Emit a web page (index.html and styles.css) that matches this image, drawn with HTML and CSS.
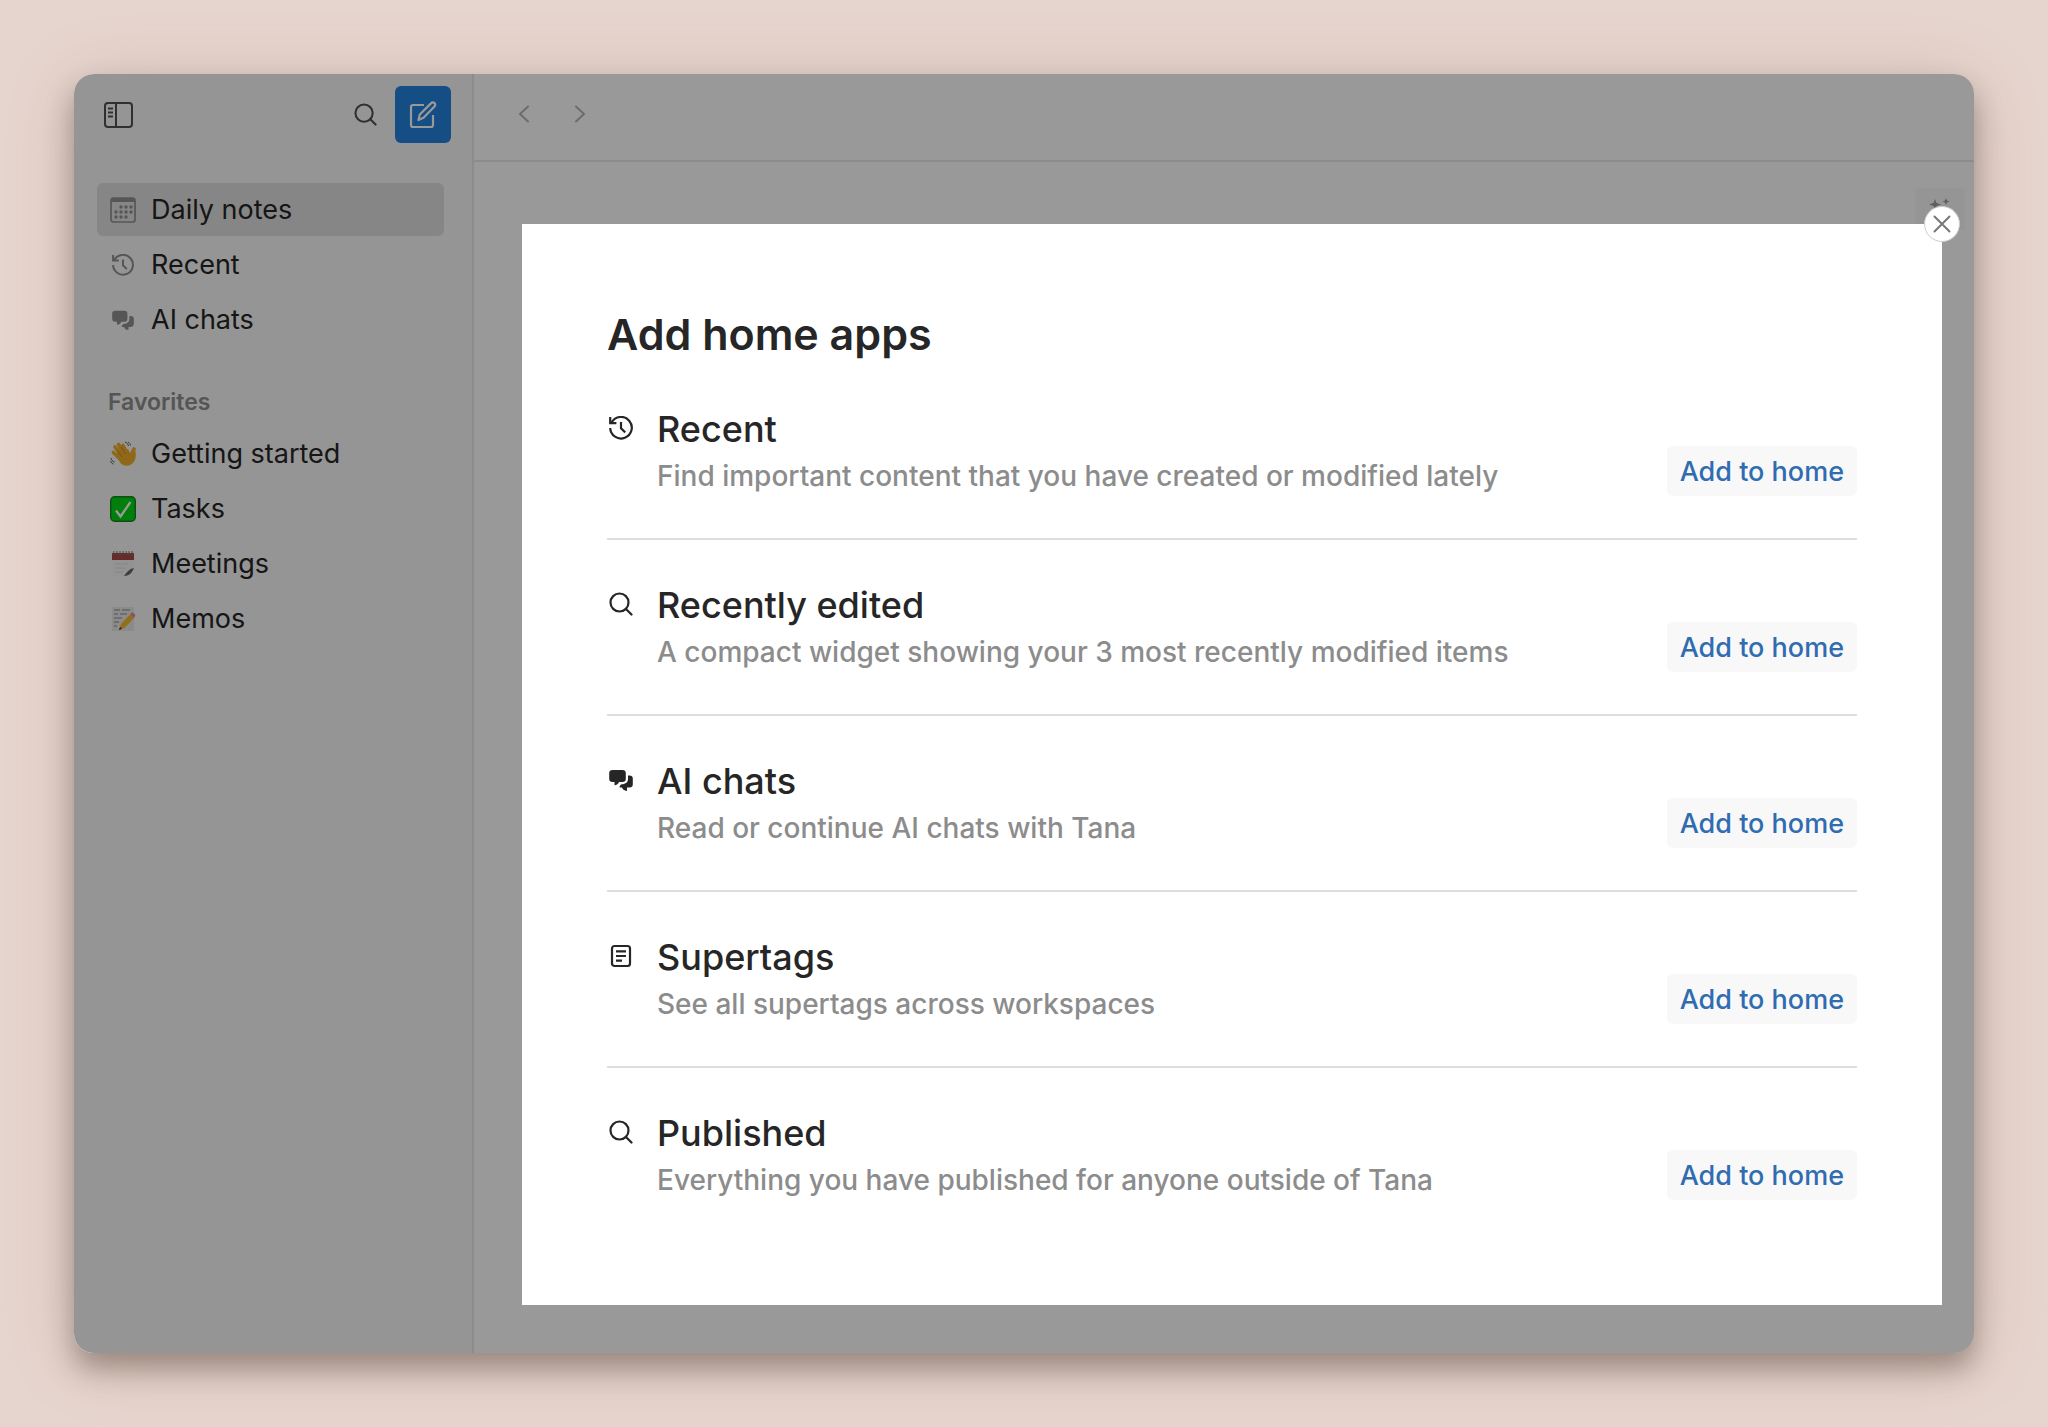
FILE: index.html
```html
<!DOCTYPE html>
<html lang="en">
<head>
    <meta charset="UTF-8">
    <meta name="viewport" content="width=device-width, initial-scale=1.0">
    <title>Add home apps</title>
    <link rel="stylesheet" href="styles.css">
</head>
<body>
    <!-- Shared icons -->
    <svg class="sprite" aria-hidden="true">
        <symbol id="icon-search" viewBox="0 0 24 24">
            <g fill="none" stroke="currentColor" stroke-width="2.200" stroke-linecap="round">
                <circle cx="10.500" cy="10.500" r="9"/>
                <path d="M17 17l5.500 5.500"/>
            </g>
        </symbol>
        <symbol id="icon-recent" viewBox="0 0 24 24">
            <g fill="none" stroke="currentColor" stroke-width="2.200">
                <path d="M2.600 6.400A10.800 10.800 0 1 1 1.200 12"/>
                <path d="M1.200 1v6.200h6.200"/>
                <path d="M12 6v6.400l4.200 4"/>
            </g>
        </symbol>
        <symbol id="icon-chats" viewBox="0 0 24 24">
            <path fill="currentColor" d="M3.500 2h10A3.300 3.300 0 0 1 16.800 5.300v5.400A3.300 3.300 0 0 1 13.500 14H10c-.6 2-2.300 3.200-4.500 3.200V14h-2A3.300 3.300 0 0 1 .2 10.700V5.300A3.300 3.300 0 0 1 3.500 2z"/>
            <path fill="currentColor" d="M19 7.500h1.500a3.300 3.300 0 0 1 3.300 3.300v5.400a3.300 3.300 0 0 1-3.300 3.300H18V23c-3-.3-4.500-2-5-3.500h-2.500c0-.8.5-2.500 2-3.200 4.500-.3 6.500-2.300 6.500-5.600z"/>
        </symbol>
    </svg>

    <div class="window">
        <aside class="sidebar">
            <div class="sidebar-top">
                <button class="icon-button toggle" aria-label="Toggle sidebar">
                    <svg width="30" height="26" viewBox="0 0 30 26" fill="none" stroke="currentColor" stroke-width="2">
                        <rect x="1" y="1" width="27" height="24" rx="3"/>
                        <path d="M12 1v24M4 6.500h5M4 10.500h5M4 14.500h5"/>
                    </svg>
                </button>
                <button class="icon-button" aria-label="Search">
                    <svg width="23" height="23"><use href="#icon-search"/></svg>
                </button>
                <button class="compose" aria-label="New note">
                    <svg width="30" height="30" viewBox="0 0 30 30" fill="none" stroke="currentColor" stroke-width="2.200" stroke-linejoin="round">
                        <path d="M16 5H5a2 2 0 0 0-2 2v18a2 2 0 0 0 2 2h18a2 2 0 0 0 2-2V15"/>
                        <path d="M10.500 20l1.300-5.500L23.200 3.100a2.300 2.300 0 0 1 3.300 0 2.300 2.300 0 0 1 0 3.300L15.500 17.700z"/>
                    </svg>
                </button>
            </div>

            <nav>
                <a href="#" class="nav-item active">
                    <svg class="nav-icon" viewBox="0 0 26 26">
                        <rect x="1" y="1" width="24" height="24" rx="2.500" fill="none" stroke="currentColor" stroke-width="1.700"/>
                        <path d="M1 1h24v4H1z" fill="currentColor"/>
                        <g fill="currentColor">
                            <circle cx="11" cy="10" r="1.700"/><circle cx="16" cy="10" r="1.700"/><circle cx="21" cy="10" r="1.700"/>
                            <circle cx="6" cy="15" r="1.700"/><circle cx="11" cy="15" r="1.700"/><circle cx="16" cy="15" r="1.700"/><circle cx="21" cy="15" r="1.700"/>
                            <circle cx="6" cy="20" r="1.700"/><circle cx="11" cy="20" r="1.700"/><circle cx="16" cy="20" r="1.700"/>
                        </g>
                    </svg>
                    Daily notes
                </a>
                <a href="#" class="nav-item">
                    <svg class="nav-icon small"><use href="#icon-recent"/></svg>
                    Recent
                </a>
                <a href="#" class="nav-item">
                    <svg class="nav-icon small"><use href="#icon-chats"/></svg>
                    AI chats
                </a>
            </nav>

            <h2 class="nav-title">Favorites</h2>
            <nav>
                <a href="#" class="nav-item">
                    <svg class="nav-icon" viewBox="0 0 26 26">
                        <g stroke="#f0ad2c" stroke-linecap="round" fill="none" stroke-width="3.600">
                            <path d="M12 15L5 6M14 13L8.500 3.500M17 12L13 4.500M10 18L3.500 11.500M21 14l3-6"/>
                        </g>
                        <path d="M6 12l12-4 2 4 5.500-2c1 7-.5 11-4.500 13.500s-9 1-11-2z" fill="#f0ad2c"/>
                        <path d="M7 9l5 7M11 6l5 7" stroke="#b97a18" stroke-width=".7"/>
                        <path d="M15 1c2 .5 3 2 3.500 4M18 1c1.500.8 2.300 2 2.500 3.500M1 17c.3 2 1.500 3.500 3.500 4M.5 20c.7 1.700 1.500 2.600 3 3" stroke="#555" fill="none"/>
                    </svg>
                    Getting started
                </a>
                <a href="#" class="nav-item">
                    <svg class="nav-icon" viewBox="0 0 26 26">
                        <rect x=".7" y=".7" width="24.600" height="24.600" rx="4" fill="#00d416" stroke="#13841d" stroke-width="1.400"/>
                        <path d="M6 14.500l4.500 6L20.500 6" fill="none" stroke="#fff" stroke-width="2.300"/>
                    </svg>
                    Tasks
                </a>
                <a href="#" class="nav-item">
                    <svg class="nav-icon" viewBox="0 0 26 26">
                        <path d="M2 8h22v10l-8 7H2z" fill="#f5f5f5"/>
                        <path d="M2 2h22v7H2z" fill="#a84a4a"/>
                        <path d="M4 0v4M7 0v4M10 0v4M13 0v4M16 0v4M19 0v4M22 0v4" stroke="#777"/>
                        <path d="M5 13h13M5 17h11M5 21h8" stroke="#ddd"/>
                        <path d="M24 17c-5 1-7 4-10 8 5 0 8-3 10-8z" fill="#666"/>
                    </svg>
                    Meetings
                </a>
                <a href="#" class="nav-item">
                    <svg class="nav-icon" viewBox="0 0 26 26">
                        <path d="M2 1h22v24H2z" fill="#e8e8e8"/>
                        <path d="M4 4h6M12 4h8M4 8h4M10 8h7M4 12h8M4 16h5M4 20h3" stroke="#888"/>
                        <path d="M9 24l2-6L20 8.500l4 3.500-9.500 10z" fill="#f5b82e"/>
                        <path d="M20 8.500l1.500-1.800c1-1 4.500 2 3.700 3.300L24 12z" fill="#e58b97"/>
                        <path d="M9 24l1-3 2 1.800z" fill="#333"/>
                    </svg>
                    Memos
                </a>
            </nav>
        </aside>

        <main class="content">
            <header class="toolbar">
                <button class="arrow" aria-label="Back">
                    <svg width="12" height="18" viewBox="0 0 12 18"><path d="M10 1.500L2 9l8 7.500"/></svg>
                </button>
                <button class="arrow" aria-label="Forward">
                    <svg width="12" height="18" viewBox="0 0 12 18"><path d="M2 1.500L10 9l-8 7.500"/></svg>
                </button>
            </header>
            <div class="actions">
                <button class="ai-button" aria-label="AI">
                    <svg width="24" height="24" viewBox="0 0 24 24" fill="currentColor">
                        <path d="M7 3l1.500 4L13 8.500 8.500 10 7 14l-1.500-4L1 8.500 5.500 7zM18 2l1 2.500 2.500 1L19 6.500 18 9l-1-2.500-2.500-1 2.500-1zM15 12l1.500 4 4 1.500-4 1.500-1.500 4-1.500-4-4-1.500 4-1.500z"/>
                    </svg>
                </button>
            </div>
        </main>

        <div class="overlay">
            <div class="modal" role="dialog" aria-labelledby="modalTitle">
                <button class="close" aria-label="Close">
                    <svg width="18" height="18" viewBox="0 0 18 18"><path d="M1.500 1.500l15 15M16.500 1.500l-15 15"/></svg>
                </button>
                <h1 id="modalTitle">Add home apps</h1>

                <div class="app">
                    <svg class="app-icon"><use href="#icon-recent"/></svg>
                    <div class="app-text">
                        <h3>Recent</h3>
                        <p>Find important content that you have created or modified lately</p>
                    </div>
                    <button class="add">Add to home</button>
                </div>
                <div class="app">
                    <svg class="app-icon"><use href="#icon-search"/></svg>
                    <div class="app-text">
                        <h3>Recently edited</h3>
                        <p>A compact widget showing your 3 most recently modified items</p>
                    </div>
                    <button class="add">Add to home</button>
                </div>
                <div class="app">
                    <svg class="app-icon"><use href="#icon-chats"/></svg>
                    <div class="app-text">
                        <h3>AI chats</h3>
                        <p>Read or continue AI chats with Tana</p>
                    </div>
                    <button class="add">Add to home</button>
                </div>
                <div class="app">
                    <svg class="app-icon" viewBox="0 0 24 24" fill="none" stroke="currentColor" stroke-width="2.200">
                        <rect x="3" y="2" width="18" height="20" rx="2.500"/>
                        <path d="M7 7.300h10M7 12h10M7 16.700h6"/>
                    </svg>
                    <div class="app-text">
                        <h3>Supertags</h3>
                        <p>See all supertags across workspaces</p>
                    </div>
                    <button class="add">Add to home</button>
                </div>
                <div class="app">
                    <svg class="app-icon"><use href="#icon-search"/></svg>
                    <div class="app-text">
                        <h3>Published</h3>
                        <p>Everything you have published for anyone outside of Tana</p>
                    </div>
                    <button class="add">Add to home</button>
                </div>
            </div>
        </div>
    </div>
</body>
</html>
```
FILE: styles.css
```css
* {
    box-sizing: border-box;
}
body {
    margin: 0;
    padding: 74px;
    min-height: 100vh;
    display: flex;
    background-color: #e6d5ce;
    font-family: Inter, sans-serif;
    color: #262626;
}
h1, h2, h3, p {
    margin: 0;
}
button {
    border: none;
    padding: 0;
    background: none;
    color: inherit;
    font-family: inherit;
    cursor: pointer;
}
svg {
    display: block;
}
.sprite {
    position: absolute;
    width: 0;
    height: 0;
}
.window {
    position: relative;
    flex: 1;
    display: flex;
    border-radius: 20px;
    overflow: hidden;
    background-color: #fff;
    box-shadow: 0 16px 28px rgba(40,30,15,0.35), 0 8px 70px rgba(110,60,50,0.18);
}

/* Sidebar */
.sidebar {
    width: 400px;
    flex-shrink: 0;
    padding: 12px 22px 12px 23px;
    background-color: #f8f8f8;
    border-right: 2px solid #e9e9e9;
}
.sidebar-top {
    display: flex;
    align-items: center;
    height: 57px;
    margin-bottom: 40px;
}
.icon-button {
    color: #505050;
}
.toggle {
    margin: 0 auto 0 7px;
}
.compose {
    display: flex;
    align-items: center;
    justify-content: center;
    width: 56px;
    height: 57px;
    margin-left: 18px;
    margin-right: -1px;
    border-radius: 6px;
    background-color: #2380de;
    color: #fff;
}
.nav-item {
    display: flex;
    align-items: center;
    gap: 15px;
    height: 53px;
    margin: 0 6px 2px 0;
    padding-left: 13px;
    border-radius: 6px;
    font-size: 27px;
    color: #262626;
    text-decoration: none;
}
.nav-item.active {
    background-color: #dfdfdf;
}
.nav-icon {
    width: 26px;
    height: 26px;
    color: #909090;
}
.nav-icon.small {
    padding: 2px;
}
.nav-title {
    margin: 39px 0 8px 11px;
    line-height: 34px;
    font-size: 23px;
    font-weight: 600;
    color: #8e8e8e;
}

/* Main area */
.content {
    flex: 1;
}
.toolbar {
    display: flex;
    align-items: center;
    gap: 44px;
    height: 88px;
    padding: 0 44px 6px;
    border-bottom: 2px solid #e9e9e9;
}
.arrow {
    color: #b5b5b5;
}
.arrow path,
.close path {
    fill: none;
    stroke: currentColor;
    stroke-width: 2;
    stroke-linecap: round;
}
.actions {
    display: flex;
    justify-content: flex-end;
    padding: 26px 9px;
}
.ai-button {
    display: flex;
    justify-content: center;
    width: 50px;
    height: 42px;
    padding-top: 8px;
    border-radius: 4px;
    background-color: #f8f8f8;
    color: #a0a0a0;
}

/* Modal */
.overlay {
    position: absolute;
    inset: 0;
    display: flex;
    padding: 150px 32px 48px 448px;
    background-color: rgba(0,0,0,0.4);
}
.modal {
    position: relative;
    flex: 1;
    padding: 83px 85px 0;
    background-color: #fff;
}
.close {
    position: absolute;
    top: -18px;
    right: -18px;
    display: flex;
    align-items: center;
    justify-content: center;
    width: 36px;
    height: 36px;
    border: 1px solid #ccc;
    border-radius: 50%;
    background-color: #fff;
    color: #777;
}
.modal h1 {
    margin-bottom: 3px;
    line-height: 54px;
    font-size: 43px;
    font-weight: 600;
}
.app {
    display: flex;
    align-items: flex-end;
    padding: 42px 0;
    border-bottom: 2px solid #ddd;
}
.app:last-child {
    border-bottom: none;
}
.app-icon {
    align-self: flex-start;
    width: 24px;
    height: 24px;
    margin: 10px 24px 0 2px;
}
.app-text {
    flex: 1;
}
.app h3 {
    margin-bottom: 4px;
    line-height: 46px;
    font-size: 36px;
    font-weight: 500;
}
.app p {
    line-height: 40px;
    font-size: 28px;
    font-weight: 450;
    color: #8c8c8c;
}
.add {
    height: 50px;
    padding: 0 13px;
    border-radius: 6px;
    background-color: #f8f8f8;
    font-size: 27px;
    font-weight: 500;
    color: #2f6cb0;
}
```
